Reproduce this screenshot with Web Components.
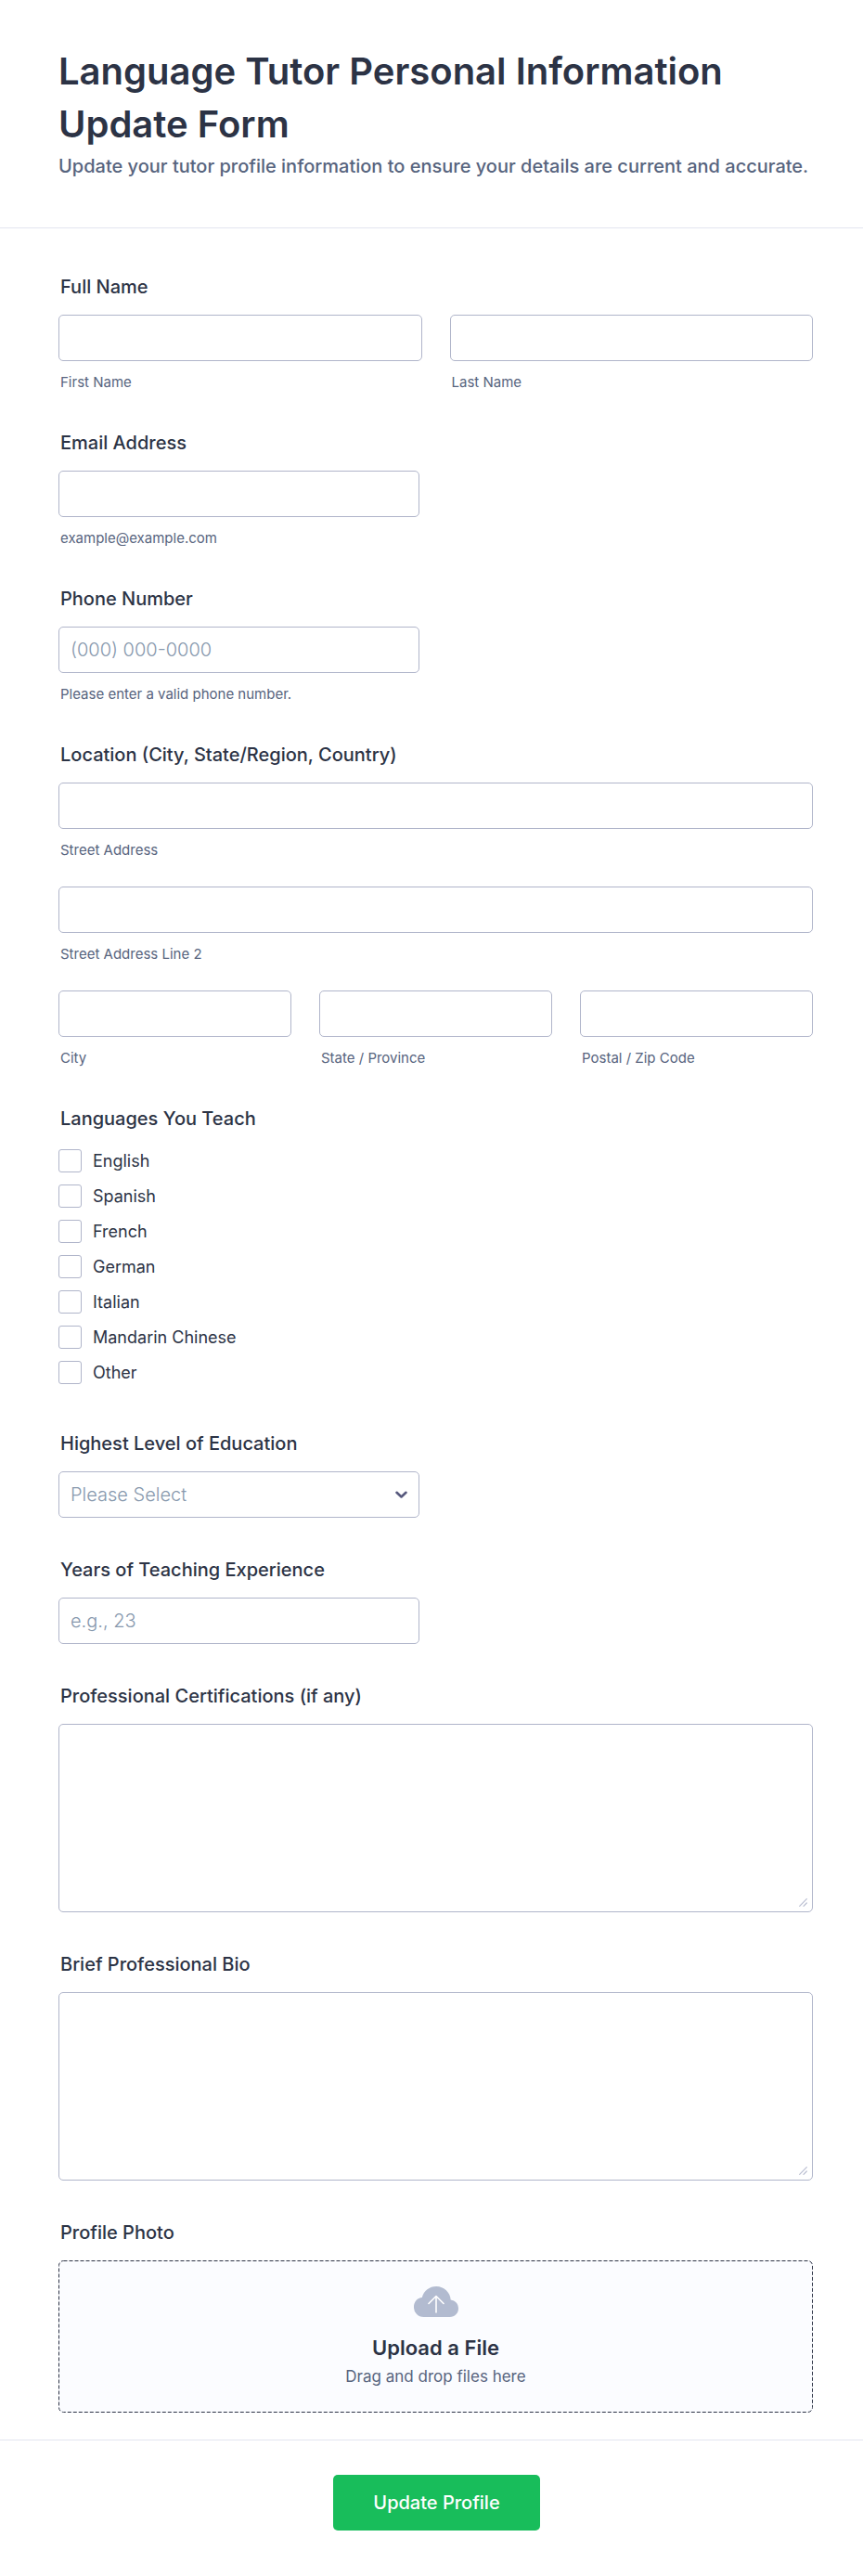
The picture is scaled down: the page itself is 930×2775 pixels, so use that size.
<!DOCTYPE html>
<html lang="en">
<head>
<meta charset="utf-8">
<meta name="viewport" content="width=device-width, initial-scale=1">
<title>Language Tutor Personal Information Update Form</title>
<style>
  body {
    margin: 0;
    background: #fff;
    color: #2c3345;
    font-family: Inter, sans-serif;
    --ink: #2c3345;
    --muted: #57647e;
    --line: #b0b5ca;
    --rule: #e3e5f0;
    --placeholder: #8798ad;
  }
</style>
</head>
<body>
<tutor-form>
  <form-header slot="header">
    Language Tutor Personal Information Update Form
    <span slot="subtitle">Update your tutor profile information to ensure your details are current and accurate.</span>
  </form-header>

  <field-group heading="Full Name">
    <field-row>
      <text-field hint="First Name"></text-field>
      <text-field hint="Last Name"></text-field>
    </field-row>
  </field-group>
  <text-field half label="Email Address" hint="example@example.com" type="email"></text-field>
  <text-field half label="Phone Number" hint="Please enter a valid phone number." type="tel" placeholder="(000) 000-0000"></text-field>
  <field-group heading="Location (City, State/Region, Country)">
    <text-field hint="Street Address"></text-field>
    <text-field hint="Street Address Line 2"></text-field>
    <field-row>
      <text-field hint="City"></text-field>
      <text-field hint="State / Province"></text-field>
      <text-field hint="Postal / Zip Code"></text-field>
    </field-row>
  </field-group>
  <field-group heading="Languages You Teach" options>
    <check-option>English</check-option>
    <check-option>Spanish</check-option>
    <check-option>French</check-option>
    <check-option>German</check-option>
    <check-option>Italian</check-option>
    <check-option>Mandarin Chinese</check-option>
    <check-option>Other</check-option>
  </field-group>
  <select-field label="Highest Level of Education" placeholder="Please Select"></select-field>
  <text-field half label="Years of Teaching Experience" placeholder="e.g., 23"></text-field>
  <area-field label="Professional Certifications (if any)"></area-field>
  <area-field label="Brief Professional Bio"></area-field>
  <file-field label="Profile Photo"></file-field>

  <submit-button slot="footer">Update Profile</submit-button>
</tutor-form>

<script>
const base = `
  *, *::before, *::after { box-sizing: border-box; }
  :host { display: block; }
  .label, legend {
    display: block; margin: 0 0 17px; padding: 0 2px;
    font-size: 20px; line-height: 25px; font-weight: 500; color: var(--ink);
  }
  .hint {
    display: block; margin-top: 13px; padding: 0 2px;
    font-size: 15px; line-height: 19px; color: var(--muted);
  }
  .control {
    display: block; width: 100%; height: 50px; margin: 0; padding: 0 12px;
    border: 1px solid var(--line); border-radius: 5px; background: #fff;
    font-family: inherit; font-size: 20px; line-height: 25px; font-weight: 400; color: var(--ink);
    outline: none;
  }
  .control::placeholder { color: var(--placeholder); opacity: 1; font-weight: 300; }
  .control:focus-visible { border-color: #2e69ff; box-shadow: 0 0 0 3px #2e69ff33; }
`;

class Base extends HTMLElement {
  mount(css, html) {
    this.attachShadow({ mode: "open" }).innerHTML = `<style>${base}${css}</style>${html}`;
  }
  attr(name) { return this.getAttribute(name) || ""; }
}

customElements.define("tutor-form", class extends Base {
  connectedCallback() {
    this.mount(`
      form { display: block; }
      .fields { display: flex; flex-direction: column; gap: 44px; padding: 51px 54px 29px 63px; }
      .footer { border-top: 1px solid var(--rule); padding: 37px 52px 49px 63px; display: flex; justify-content: center; }
    `, `<form><slot name="header"></slot>
      <div class="fields"><slot></slot></div>
      <div class="footer"><slot name="footer"></slot></div></form>`);
  }
});

customElements.define("form-header", class extends Base {
  connectedCallback() {
    this.mount(`
      :host { padding: 48px 52px 53px 63px; border-bottom: 1px solid var(--rule); }
      h1 { margin: 0; font-size: 40px; line-height: 57px; font-weight: 600; }
      p { margin: 5px 0 0; font-size: 20px; line-height: 25px; font-weight: 500; color: var(--muted); }
    `, `<h1><slot></slot></h1><p><slot name="subtitle"></slot></p>`);
  }
});

customElements.define("field-group", class extends Base {
  connectedCallback() {
    this.mount(`
      fieldset { margin: 0; padding: 0; border: 0; min-width: 0; }
      .body { display: flex; flex-direction: column; gap: 30px; }
      :host([options]) .body { gap: 13px; padding: 3px 0 8px; }
    `, `<fieldset><legend>${this.attr("heading")}</legend><div class="body"><slot></slot></div></fieldset>`);
  }
});

customElements.define("field-row", class extends Base {
  connectedCallback() {
    this.mount(`
      :host { display: flex; gap: 30px; }
      ::slotted(*) { flex: 1 1 0; min-width: 0; }
    `, `<slot></slot>`);
  }
});

customElements.define("text-field", class extends Base {
  connectedCallback() {
    const label = this.attr("label"), hint = this.attr("hint");
    const top = label ? `<label class="label" for="control">${label}</label>` : "";
    const below = !hint ? ""
      : label ? `<span class="hint" id="hint">${hint}</span>`
      : `<label class="hint" for="control">${hint}</label>`;
    this.mount(`
      :host([half]) .control { width: calc(50% - 18px); }
    `, `${top}<input class="control" id="control" type="${this.attr("type") || "text"}"
        placeholder="${this.attr("placeholder")}" ${label && hint ? 'aria-describedby="hint"' : ""}>${below}`);
  }
});

customElements.define("check-option", class extends Base {
  connectedCallback() {
    this.mount(`
      label { display: flex; align-items: center; gap: 12px; width: fit-content; font-size: 18px; line-height: 25px; cursor: pointer; }
      input { appearance: none; width: 25px; height: 25px; margin: 0; border: 1px solid var(--line); border-radius: 3px; background: #fff; }
      input:checked { background: #2e69ff; border-color: #2e69ff; }
    `, `<label><input type="checkbox"><span><slot></slot></span></label>`);
  }
});

customElements.define("select-field", class extends Base {
  connectedCallback() {
    this.mount(`
      .box { display: grid; align-items: center; width: calc(50% - 18px); }
      .box > * { grid-area: 1 / 1; }
      select.control { appearance: none; color: var(--placeholder); font-weight: 300; }
      svg { justify-self: end; margin-right: 13px; pointer-events: none; }
    `, `<label class="label" for="control">${this.attr("label")}</label>
      <div class="box">
        <select class="control" id="control">
          <option>${this.attr("placeholder")}</option>
        </select>
        <svg width="13" height="9" viewBox="0 0 13 9" fill="none" stroke="#57597d" stroke-width="2.6" stroke-linecap="round" stroke-linejoin="round"><path d="M1.500 1.800 6.500 6.500 11.500 1.800"/></svg>
      </div>`);
  }
});

customElements.define("area-field", class extends Base {
  connectedCallback() {
    this.mount(`
      .box { display: grid; }
      .box > * { grid-area: 1 / 1; }
      textarea.control { height: 203px; padding: 10px 12px; resize: vertical; }
      textarea::-webkit-resizer { background: transparent; }
      svg { place-self: end; margin: 0 6px 6px 0; pointer-events: none; }
    `, `<label class="label" for="control">${this.attr("label")}</label>
      <div class="box">
        <textarea class="control" id="control"></textarea>
        <svg width="9" height="9" viewBox="0 0 9 9" stroke="#b8bdd0" stroke-width="1.200" stroke-linecap="round"><path d="M.7 8.300 8.300.7M5 8.300 8.300 5"/></svg>
      </div>`);
  }
});

customElements.define("file-field", class extends Base {
  connectedCallback() {
    this.mount(`
      .drop {
        position: relative; display: flex; flex-direction: column; align-items: center;
        padding: 28px 12px 24px; border-radius: 5px; background: #fbfcff;
      }
      .outline { position: absolute; inset: 0; width: 100%; height: 100%; }
      .outline rect { x: 0.5px; y: 0.5px; width: calc(100% - 1px); height: calc(100% - 1px); fill: none; stroke: var(--ink); stroke-dasharray: 4 2; }
      .drop input { position: absolute; inset: 0; width: 100%; height: 100%; opacity: 0; cursor: pointer; }
      strong { margin-top: 17px; font-size: 22px; line-height: 32px; font-weight: 600; }
      .note { font-size: 17px; line-height: 30px; color: var(--muted); }
    `, `<label class="label" for="control">${this.attr("label")}</label>
      <div class="drop">
        <svg class="outline" aria-hidden="true"><rect rx="5"/></svg>
        <svg width="48" height="33" viewBox="0 0 48 33" fill="none">
          <path fill="#b2bbd0" d="M10.500 33A10.500 10.500 0 0 1 0 22C0 16.500 4 12.300 8.800 12C10.600 4.800 16.900 0 24.200 0C32.600 0 39.200 6.400 39.700 14.600C44.600 15.300 48 19 48 23.800C48 29 44 33 38.800 33Z"/>
          <path stroke="#fff" stroke-width="1.600" stroke-linecap="round" stroke-linejoin="round" d="M24 28V11M16 18.500 24 10.500 32 18.500"/>
        </svg>
        <strong>Upload a File</strong>
        <span class="note">Drag and drop files here</span>
        <input type="file" id="control">
      </div>`);
  }
});

customElements.define("submit-button", class extends Base {
  connectedCallback() {
    this.mount(`
      button {
        display: block; height: 60px; padding: 0 43px; border: 0; border-radius: 5px; background: #18bd5b;
        font-family: inherit; font-size: 20px; line-height: 25px; font-weight: 500; color: #fff; cursor: pointer;
      }
    `, `<button type="submit"><slot></slot></button>`);
  }
});
</script>
</body>
</html>
